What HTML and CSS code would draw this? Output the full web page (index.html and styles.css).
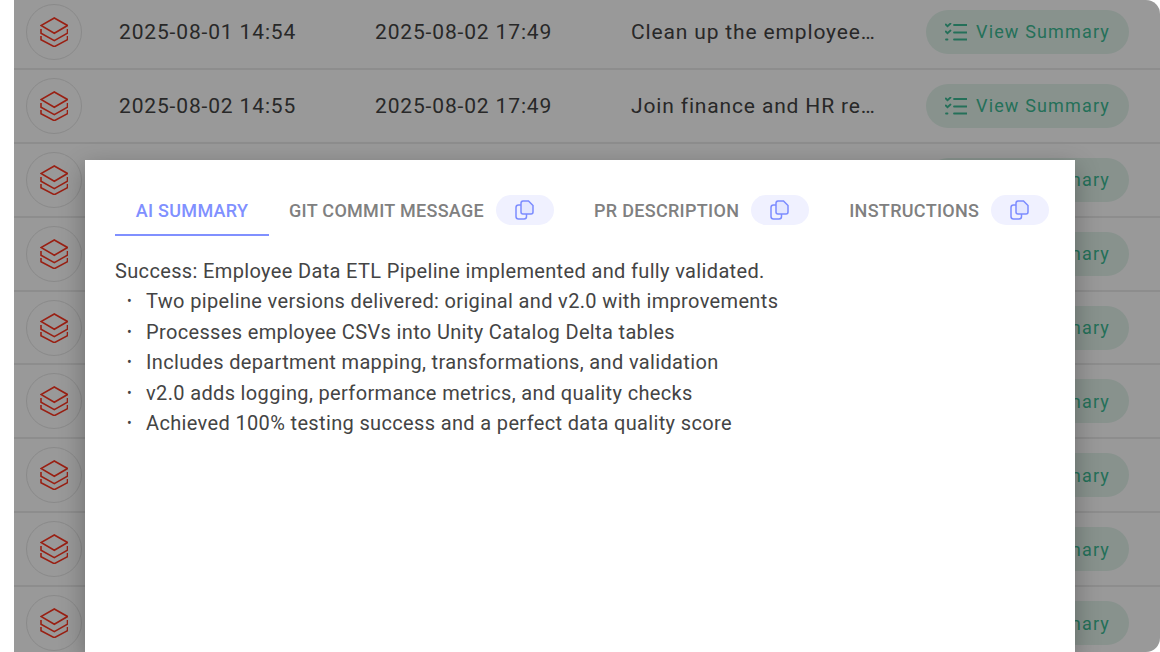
FILE: index.html
```html
<!DOCTYPE html>
<html>

<head>
    <title>Run history</title>
    <meta name="viewport" content="width=device-width, initial-scale=1">
    <link rel="stylesheet" href="styles.css">
</head>

<body>
    <svg class="sprites" width="0" height="0">
        <symbol id="stack-logo" viewBox="0 0 28 30">
            <path d="M14.300 1 27.500 8.500 14.300 16.200 1 8.500Z" />
            <path d="M1 12V16.200L14.300 23.700 27.500 16.200V12" />
            <path d="M1 19V22.700L14.300 29.700 27.500 22.700V19" />
        </symbol>
        <symbol id="checklist" viewBox="0 0 22 18">
            <path d="M.8 1.500 2.500 3.200 5.500.5M.8 8.500 2.500 10.200 5.500 7.500" />
            <path d="M9 2H22M9 9.500H22M9 16.500H22M1 16.500H2.500" />
        </symbol>
        <symbol id="copy" viewBox="0 0 20 20">
            <path d="M6 5H3.500C2 5 1 6 1 7.500V16.500C1 18 2 19 3.500 19H9C10.500 19 11.500 18 11.500 16.500V14" />
            <path class="copy-front" d="M6 3.200C6 2 7 1 8 1H13.500L18 5.500V12C18 13.200 17 14 16 14H8C7 14 6 13 6 12Z" />
        </symbol>
    </svg>

    <div class="panel">
        <div class="rows">
            <div class="row">
                <div class="logo"><svg><use href="#stack-logo" /></svg></div>
                <div class="cell">2025-08-01 14:54</div>
                <div class="cell">2025-08-02 17:49</div>
                <div class="cell">Clean up the employee…</div>
                <div class="summary-btn"><svg><use href="#checklist" /></svg>View Summary</div>
            </div>
            <div class="row">
                <div class="logo"><svg><use href="#stack-logo" /></svg></div>
                <div class="cell">2025-08-02 14:55</div>
                <div class="cell">2025-08-02 17:49</div>
                <div class="cell">Join finance and HR re…</div>
                <div class="summary-btn"><svg><use href="#checklist" /></svg>View Summary</div>
            </div>
            <div class="row">
                <div class="logo"><svg><use href="#stack-logo" /></svg></div>
                <div class="summary-btn"><svg><use href="#checklist" /></svg>View Summary</div>
            </div>
            <div class="row">
                <div class="logo"><svg><use href="#stack-logo" /></svg></div>
                <div class="summary-btn"><svg><use href="#checklist" /></svg>View Summary</div>
            </div>
            <div class="row">
                <div class="logo"><svg><use href="#stack-logo" /></svg></div>
                <div class="summary-btn"><svg><use href="#checklist" /></svg>View Summary</div>
            </div>
            <div class="row">
                <div class="logo"><svg><use href="#stack-logo" /></svg></div>
                <div class="summary-btn"><svg><use href="#checklist" /></svg>View Summary</div>
            </div>
            <div class="row">
                <div class="logo"><svg><use href="#stack-logo" /></svg></div>
                <div class="summary-btn"><svg><use href="#checklist" /></svg>View Summary</div>
            </div>
            <div class="row">
                <div class="logo"><svg><use href="#stack-logo" /></svg></div>
                <div class="summary-btn"><svg><use href="#checklist" /></svg>View Summary</div>
            </div>
            <div class="row">
                <div class="logo"><svg><use href="#stack-logo" /></svg></div>
                <div class="summary-btn"><svg><use href="#checklist" /></svg>View Summary</div>
            </div>
        </div>

        <div class="backdrop"></div>

        <div class="modal">
            <div class="tabs">
                <div class="tab active">AI Summary</div>
                <div class="tab">Git Commit Message<span class="copy"><svg><use href="#copy" /></svg></span></div>
                <div class="tab">PR Description<span class="copy"><svg><use href="#copy" /></svg></span></div>
                <div class="tab">Instructions<span class="copy"><svg><use href="#copy" /></svg></span></div>
            </div>
            <div class="summary-text">
                <p>Success: Employee Data ETL Pipeline implemented and fully validated.</p>
                <ul>
                    <li>Two pipeline versions delivered: original and v2.0 with improvements</li>
                    <li>Processes employee CSVs into Unity Catalog Delta tables</li>
                    <li>Includes department mapping, transformations, and validation</li>
                    <li>v2.0 adds logging, performance metrics, and quality checks</li>
                    <li>Achieved 100% testing success and a perfect data quality score</li>
                </ul>
            </div>
        </div>
    </div>
</body>

</html>
```

FILE: styles.css
```css
body {
    margin: 0;
    height: 652px;
    overflow: hidden;
    background-color: #ffffff;
    font-family: Roboto, Arial, sans-serif;
    color: #444444;
}

.sprites {
    position: absolute;
}

.panel {
    position: relative;
    margin-left: 14px;
    height: 652px;
    overflow: hidden;
    background-color: #ffffff;
    border-radius: 0 14px 14px 0;
}

.rows {
    margin-top: -4px;
}

.row {
    display: flex;
    align-items: center;
    box-sizing: border-box;
    height: 73.900px;
    padding: 0 31px 0 12px;
    border-bottom: 2px solid #ececec;
}

.logo {
    display: flex;
    align-items: center;
    justify-content: center;
    box-sizing: border-box;
    width: 56px;
    height: 56px;
    margin-right: 37px;
    border: 1.500px solid #e6e6e6;
    border-radius: 50%;
}

.logo svg {
    width: 28px;
    height: 30px;
    fill: none;
    stroke: #ff3621;
    stroke-width: 1.600;
}

.cell {
    width: 256px;
    font-size: 21px;
    letter-spacing: 0.85px;
    color: #444444;
    white-space: nowrap;
}

.summary-btn {
    display: flex;
    align-items: center;
    justify-content: center;
    box-sizing: border-box;
    width: 203px;
    height: 44px;
    margin-left: auto;
    border-radius: 22px;
    background-color: #e3f4ec;
    color: #3dbb94;
    font-size: 18px;
    letter-spacing: 1.150px;
}

.summary-btn svg {
    width: 22px;
    height: 18px;
    margin-right: 9px;
    fill: none;
    stroke: currentColor;
    stroke-width: 1.800;
    stroke-linecap: round;
}

.backdrop {
    position: absolute;
    top: 0;
    right: 0;
    bottom: 0;
    left: 0;
    background-color: rgba(0, 0, 0, 0.4);
}

.modal {
    position: absolute;
    top: 160px;
    left: 71px;
    bottom: 0;
    box-sizing: border-box;
    width: 990px;
    padding: 30px;
    background-color: #ffffff;
    box-shadow: 0 8px 24px rgba(0, 0, 0, 0.3);
}

.tabs {
    display: flex;
    height: 46px;
}

.tab {
    display: flex;
    align-items: center;
    box-sizing: border-box;
    height: 46px;
    padding: 0 20px 6px;
    font-size: 18px;
    font-weight: 500;
    letter-spacing: 0.3px;
    white-space: nowrap;
    text-transform: uppercase;
    color: #808080;
}

.tab.active {
    flex-shrink: 0;
    width: 154px;
    justify-content: center;
    padding: 0 0 4px;
    border-bottom: 2px solid #8090ff;
    color: #8090ff;
}

.copy {
    display: flex;
    align-items: center;
    justify-content: center;
    flex-shrink: 0;
    width: 58px;
    height: 30px;
    margin-left: 12px;
    border-radius: 15px;
    background-color: #f0f1ff;
}

.copy svg {
    width: 20px;
    height: 20px;
    fill: none;
    stroke: #7c8cff;
    stroke-width: 1.500;
}

.copy-front {
    fill: #e4e7ff;
}

.summary-text {
    margin-top: 20px;
    font-size: 20px;
    line-height: 30.400px;
    letter-spacing: 0.35px;
    color: #444444;
}

.summary-text p {
    margin: 0;
}

.summary-text ul {
    margin: 0;
    padding-left: 12px;
    list-style: none;
}

.summary-text li {
    display: flex;
}

.summary-text li::before {
    content: "•";
    flex-shrink: 0;
    width: 19px;
    font-size: 14px;
}
```
